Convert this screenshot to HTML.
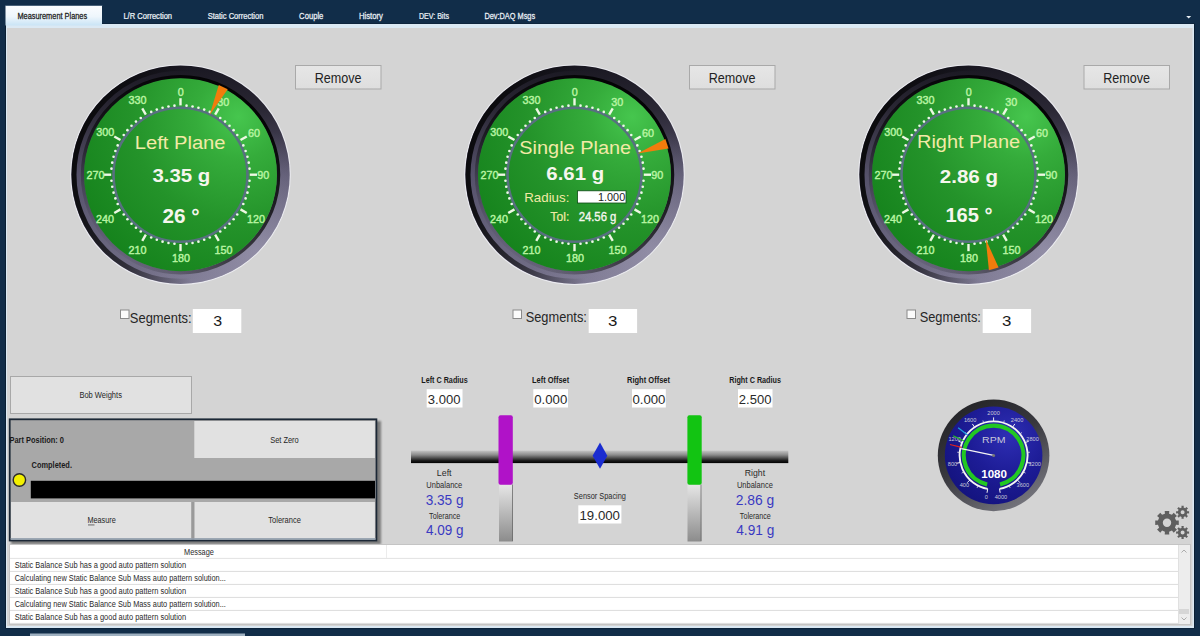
<!DOCTYPE html>
<html><head><meta charset="utf-8"><style>
html,body{margin:0;padding:0;width:1200px;height:636px;overflow:hidden;background:#112d49;}
svg{display:block;font-family:"Liberation Sans",sans-serif;}
</style></head><body>
<svg width="1200" height="636" viewBox="0 0 1200 636">
<defs><filter id="shd" x="-5%" y="-5%" width="110%" height="115%"><feGaussianBlur stdDeviation="1.0"/></filter><linearGradient id="tabg" x1="0" y1="0" x2="0" y2="1">
<stop offset="0" stop-color="#fbfdff"/><stop offset="0.55" stop-color="#eef6fc"/><stop offset="1" stop-color="#c9e4f6"/></linearGradient><linearGradient id="btng" x1="0" y1="0" x2="0" y2="1">
<stop offset="0" stop-color="#e6e6e6"/><stop offset="1" stop-color="#dedede"/></linearGradient><linearGradient id="bez1" x1="0.5" y1="0" x2="0.5" y2="1">
<stop offset="0" stop-color="#1a1822"/><stop offset="0.2" stop-color="#2a2734"/><stop offset="0.5" stop-color="#55516a"/><stop offset="1" stop-color="#747089"/></linearGradient><radialGradient id="bezhi" cx="0.85" cy="0.85" r="0.55">
<stop offset="0" stop-color="#b0acc4" stop-opacity="0.55"/><stop offset="1" stop-color="#b0acc4" stop-opacity="0"/></radialGradient><linearGradient id="bezedge" x1="0" y1="0" x2="1" y2="0">
<stop offset="0" stop-color="#000" stop-opacity="0.85"/><stop offset="0.25" stop-color="#000" stop-opacity="0.55"/><stop offset="0.55" stop-color="#000" stop-opacity="0"/></linearGradient><linearGradient id="bezin" x1="0.146" y1="0.854" x2="0.854" y2="0.146">
<stop offset="0" stop-color="#000" stop-opacity="0.05"/><stop offset="0.35" stop-color="#000" stop-opacity="0.55"/><stop offset="1" stop-color="#000" stop-opacity="0.9"/></linearGradient><radialGradient id="face" cx="0.8" cy="0.2" r="1.0" fx="0.8" fy="0.2">
<stop offset="0" stop-color="#46c64e"/><stop offset="0.22" stop-color="#35ac3b"/><stop offset="0.55" stop-color="#24932a"/><stop offset="1" stop-color="#13801a"/></radialGradient><linearGradient id="barg" x1="0" y1="0" x2="0" y2="1">
<stop offset="0" stop-color="#c4c4c4"/><stop offset="0.35" stop-color="#8a8a8a"/><stop offset="0.8" stop-color="#1a1a1a"/><stop offset="1" stop-color="#000"/></linearGradient><linearGradient id="stemg" x1="0" y1="0" x2="0" y2="1">
<stop offset="0" stop-color="#e6e6e6"/><stop offset="1" stop-color="#8c8c8c"/></linearGradient><radialGradient id="rpmface" cx="0.65" cy="0.3" r="0.8">
<stop offset="0" stop-color="#2e2eb4"/><stop offset="0.5" stop-color="#1d1c96"/><stop offset="1" stop-color="#13127c"/></radialGradient><linearGradient id="rpmbez" x1="0.2" y1="0" x2="0.8" y2="1">
<stop offset="0" stop-color="#232326"/><stop offset="0.45" stop-color="#38383e"/><stop offset="1" stop-color="#7c7c84"/></linearGradient></defs>
<rect x="0" y="0" width="1200" height="636" fill="#112d49"/>
<rect x="5" y="23.5" width="1190" height="605" fill="#0a1f33"/>
<rect x="6" y="24" width="1188" height="604" fill="#dbe9f4"/>
<rect x="7" y="28" width="1185.5" height="598" fill="#d4d4d4"/>
<rect x="5.5" y="5.5" width="96.5" height="20" fill="url(#tabg)"/>
<rect x="5" y="5" width="97.5" height="0.8" fill="#3a5570"/>
<text transform="translate(17.41,18.80) scale(0.8696,1)" font-size="8.5" font-weight="normal" fill="#222222" stroke="#222222" stroke-width="0.25">Measurement Planes</text>
<text transform="translate(123.40,18.80) scale(0.8889,1)" font-size="8.5" font-weight="normal" fill="#eaf0f6" stroke="#eaf0f6" stroke-width="0.25">L/R Correction</text>
<text transform="translate(207.66,18.80) scale(0.8888,1)" font-size="8.5" font-weight="normal" fill="#eaf0f6" stroke="#eaf0f6" stroke-width="0.25">Static Correction</text>
<text transform="translate(299.12,18.80) scale(0.8991,1)" font-size="8.5" font-weight="normal" fill="#eaf0f6" stroke="#eaf0f6" stroke-width="0.25">Couple</text>
<text transform="translate(358.88,18.80) scale(0.9124,1)" font-size="8.5" font-weight="normal" fill="#eaf0f6" stroke="#eaf0f6" stroke-width="0.25">History</text>
<text transform="translate(418.93,18.80) scale(0.8342,1)" font-size="8.5" font-weight="normal" fill="#eaf0f6" stroke="#eaf0f6" stroke-width="0.25">DEV: Bits</text>
<text transform="translate(484.41,18.80) scale(0.8682,1)" font-size="8.5" font-weight="normal" fill="#eaf0f6" stroke="#eaf0f6" stroke-width="0.25">Dev:DAQ Msgs</text>
<path d="M1186.2 16 L1191.2 16 L1188.7 18.6 Z" fill="#e8eef4"/>
<rect x="295.5" y="65.5" width="85.5" height="23.5" fill="url(#btng)" stroke="#a9a9a9" stroke-width="1"/>
<text transform="translate(314.79,82.60) scale(0.9118,1)" font-size="13.8" font-weight="normal" fill="#222" >Remove</text>
<rect x="689.5" y="65.5" width="85.5" height="23.5" fill="url(#btng)" stroke="#a9a9a9" stroke-width="1"/>
<text transform="translate(708.79,82.60) scale(0.9118,1)" font-size="13.8" font-weight="normal" fill="#222" >Remove</text>
<rect x="1084.0" y="65.5" width="85.5" height="23.5" fill="url(#btng)" stroke="#a9a9a9" stroke-width="1"/>
<text transform="translate(1103.29,82.60) scale(0.9118,1)" font-size="13.8" font-weight="normal" fill="#222" >Remove</text>
<circle cx="180.5" cy="174.7" r="110.3" fill="#f0f0f6" opacity="0.8"/>
<circle cx="180.5" cy="174.7" r="109.2" fill="url(#bez1)"/>
<circle cx="180.5" cy="174.7" r="109.2" fill="url(#bezhi)"/>
<circle cx="180.5" cy="174.7" r="106.5" fill="none" stroke="url(#bezedge)" stroke-width="5"/>
<circle cx="180.5" cy="174.7" r="98" fill="none" stroke="url(#bezin)" stroke-width="3.5"/>
<circle cx="180.5" cy="174.7" r="96.5" fill="url(#face)"/>
<circle cx="180.5" cy="174.7" r="67" fill="none" stroke="#587080" stroke-width="2.6"/>
<line x1="180.50" y1="105.40" x2="180.50" y2="98.20" stroke="#eef8e4" stroke-width="2.4"/>
<circle cx="186.54" cy="105.66" r="1.3" fill="#eef8ea"/>
<circle cx="192.53" cy="106.45" r="1.3" fill="#eef8ea"/>
<circle cx="198.44" cy="107.76" r="1.3" fill="#eef8ea"/>
<circle cx="204.20" cy="109.58" r="1.3" fill="#eef8ea"/>
<circle cx="209.79" cy="111.89" r="1.3" fill="#eef8ea"/>
<line x1="215.15" y1="114.68" x2="218.75" y2="108.45" stroke="#eef8e4" stroke-width="2.4"/>
<circle cx="220.25" cy="117.93" r="1.3" fill="#eef8ea"/>
<circle cx="225.05" cy="121.61" r="1.3" fill="#eef8ea"/>
<circle cx="229.50" cy="125.70" r="1.3" fill="#eef8ea"/>
<circle cx="233.59" cy="130.15" r="1.3" fill="#eef8ea"/>
<circle cx="237.27" cy="134.95" r="1.3" fill="#eef8ea"/>
<line x1="240.52" y1="140.05" x2="246.75" y2="136.45" stroke="#eef8e4" stroke-width="2.4"/>
<circle cx="243.31" cy="145.41" r="1.3" fill="#eef8ea"/>
<circle cx="245.62" cy="151.00" r="1.3" fill="#eef8ea"/>
<circle cx="247.44" cy="156.76" r="1.3" fill="#eef8ea"/>
<circle cx="248.75" cy="162.67" r="1.3" fill="#eef8ea"/>
<circle cx="249.54" cy="168.66" r="1.3" fill="#eef8ea"/>
<line x1="249.80" y1="174.70" x2="257.00" y2="174.70" stroke="#eef8e4" stroke-width="2.4"/>
<circle cx="249.54" cy="180.74" r="1.3" fill="#eef8ea"/>
<circle cx="248.75" cy="186.73" r="1.3" fill="#eef8ea"/>
<circle cx="247.44" cy="192.64" r="1.3" fill="#eef8ea"/>
<circle cx="245.62" cy="198.40" r="1.3" fill="#eef8ea"/>
<circle cx="243.31" cy="203.99" r="1.3" fill="#eef8ea"/>
<line x1="240.52" y1="209.35" x2="246.75" y2="212.95" stroke="#eef8e4" stroke-width="2.4"/>
<circle cx="237.27" cy="214.45" r="1.3" fill="#eef8ea"/>
<circle cx="233.59" cy="219.25" r="1.3" fill="#eef8ea"/>
<circle cx="229.50" cy="223.70" r="1.3" fill="#eef8ea"/>
<circle cx="225.05" cy="227.79" r="1.3" fill="#eef8ea"/>
<circle cx="220.25" cy="231.47" r="1.3" fill="#eef8ea"/>
<line x1="215.15" y1="234.72" x2="218.75" y2="240.95" stroke="#eef8e4" stroke-width="2.4"/>
<circle cx="209.79" cy="237.51" r="1.3" fill="#eef8ea"/>
<circle cx="204.20" cy="239.82" r="1.3" fill="#eef8ea"/>
<circle cx="198.44" cy="241.64" r="1.3" fill="#eef8ea"/>
<circle cx="192.53" cy="242.95" r="1.3" fill="#eef8ea"/>
<circle cx="186.54" cy="243.74" r="1.3" fill="#eef8ea"/>
<line x1="180.50" y1="244.00" x2="180.50" y2="251.20" stroke="#eef8e4" stroke-width="2.4"/>
<circle cx="174.46" cy="243.74" r="1.3" fill="#eef8ea"/>
<circle cx="168.47" cy="242.95" r="1.3" fill="#eef8ea"/>
<circle cx="162.56" cy="241.64" r="1.3" fill="#eef8ea"/>
<circle cx="156.80" cy="239.82" r="1.3" fill="#eef8ea"/>
<circle cx="151.21" cy="237.51" r="1.3" fill="#eef8ea"/>
<line x1="145.85" y1="234.72" x2="142.25" y2="240.95" stroke="#eef8e4" stroke-width="2.4"/>
<circle cx="140.75" cy="231.47" r="1.3" fill="#eef8ea"/>
<circle cx="135.95" cy="227.79" r="1.3" fill="#eef8ea"/>
<circle cx="131.50" cy="223.70" r="1.3" fill="#eef8ea"/>
<circle cx="127.41" cy="219.25" r="1.3" fill="#eef8ea"/>
<circle cx="123.73" cy="214.45" r="1.3" fill="#eef8ea"/>
<line x1="120.48" y1="209.35" x2="114.25" y2="212.95" stroke="#eef8e4" stroke-width="2.4"/>
<circle cx="117.69" cy="203.99" r="1.3" fill="#eef8ea"/>
<circle cx="115.38" cy="198.40" r="1.3" fill="#eef8ea"/>
<circle cx="113.56" cy="192.64" r="1.3" fill="#eef8ea"/>
<circle cx="112.25" cy="186.73" r="1.3" fill="#eef8ea"/>
<circle cx="111.46" cy="180.74" r="1.3" fill="#eef8ea"/>
<line x1="111.20" y1="174.70" x2="104.00" y2="174.70" stroke="#eef8e4" stroke-width="2.4"/>
<circle cx="111.46" cy="168.66" r="1.3" fill="#eef8ea"/>
<circle cx="112.25" cy="162.67" r="1.3" fill="#eef8ea"/>
<circle cx="113.56" cy="156.76" r="1.3" fill="#eef8ea"/>
<circle cx="115.38" cy="151.00" r="1.3" fill="#eef8ea"/>
<circle cx="117.69" cy="145.41" r="1.3" fill="#eef8ea"/>
<line x1="120.48" y1="140.05" x2="114.25" y2="136.45" stroke="#eef8e4" stroke-width="2.4"/>
<circle cx="123.73" cy="134.95" r="1.3" fill="#eef8ea"/>
<circle cx="127.41" cy="130.15" r="1.3" fill="#eef8ea"/>
<circle cx="131.50" cy="125.70" r="1.3" fill="#eef8ea"/>
<circle cx="135.95" cy="121.61" r="1.3" fill="#eef8ea"/>
<circle cx="140.75" cy="117.93" r="1.3" fill="#eef8ea"/>
<line x1="145.85" y1="114.68" x2="142.25" y2="108.45" stroke="#eef8e4" stroke-width="2.4"/>
<circle cx="151.21" cy="111.89" r="1.3" fill="#eef8ea"/>
<circle cx="156.80" cy="109.58" r="1.3" fill="#eef8ea"/>
<circle cx="162.56" cy="107.76" r="1.3" fill="#eef8ea"/>
<circle cx="168.47" cy="106.45" r="1.3" fill="#eef8ea"/>
<circle cx="174.46" cy="105.66" r="1.3" fill="#eef8ea"/>
<text transform="translate(177.73,96.20) scale(0.9300,1)" font-size="11.6" font-weight="normal" fill="#b8f4a2" stroke="#b8f4a2" stroke-width="0.45">0</text>
<text transform="translate(217.24,105.50) scale(0.9300,1)" font-size="11.6" font-weight="normal" fill="#b8f4a2" stroke="#b8f4a2" stroke-width="0.45">30</text>
<text transform="translate(248.03,136.70) scale(0.9300,1)" font-size="11.6" font-weight="normal" fill="#b8f4a2" stroke="#b8f4a2" stroke-width="0.45">60</text>
<text transform="translate(257.16,179.00) scale(0.9300,1)" font-size="11.6" font-weight="normal" fill="#b8f4a2" stroke="#b8f4a2" stroke-width="0.45">90</text>
<text transform="translate(247.00,223.00) scale(0.9300,1)" font-size="11.6" font-weight="normal" fill="#b8f4a2" stroke="#b8f4a2" stroke-width="0.45">120</text>
<text transform="translate(214.55,254.00) scale(0.9300,1)" font-size="11.6" font-weight="normal" fill="#b8f4a2" stroke="#b8f4a2" stroke-width="0.45">150</text>
<text transform="translate(171.90,262.40) scale(0.9300,1)" font-size="11.6" font-weight="normal" fill="#b8f4a2" stroke="#b8f4a2" stroke-width="0.45">180</text>
<text transform="translate(128.44,254.00) scale(0.9300,1)" font-size="11.6" font-weight="normal" fill="#b8f4a2" stroke="#b8f4a2" stroke-width="0.45">210</text>
<text transform="translate(96.04,223.10) scale(0.9300,1)" font-size="11.6" font-weight="normal" fill="#b8f4a2" stroke="#b8f4a2" stroke-width="0.45">240</text>
<text transform="translate(86.44,179.00) scale(0.9300,1)" font-size="11.6" font-weight="normal" fill="#b8f4a2" stroke="#b8f4a2" stroke-width="0.45">270</text>
<text transform="translate(96.19,135.70) scale(0.9300,1)" font-size="11.6" font-weight="normal" fill="#b8f4a2" stroke="#b8f4a2" stroke-width="0.45">300</text>
<text transform="translate(128.49,104.10) scale(0.9300,1)" font-size="11.6" font-weight="normal" fill="#b8f4a2" stroke="#b8f4a2" stroke-width="0.45">330</text>
<path d="M209.65 114.93 L227.74 89.26 L218.75 84.88 Z" fill="#f27c0c"/>
<circle cx="574.5" cy="174.7" r="110.3" fill="#f0f0f6" opacity="0.8"/>
<circle cx="574.5" cy="174.7" r="109.2" fill="url(#bez1)"/>
<circle cx="574.5" cy="174.7" r="109.2" fill="url(#bezhi)"/>
<circle cx="574.5" cy="174.7" r="106.5" fill="none" stroke="url(#bezedge)" stroke-width="5"/>
<circle cx="574.5" cy="174.7" r="98" fill="none" stroke="url(#bezin)" stroke-width="3.5"/>
<circle cx="574.5" cy="174.7" r="96.5" fill="url(#face)"/>
<circle cx="574.5" cy="174.7" r="67" fill="none" stroke="#587080" stroke-width="2.6"/>
<line x1="574.50" y1="105.40" x2="574.50" y2="98.20" stroke="#eef8e4" stroke-width="2.4"/>
<circle cx="580.54" cy="105.66" r="1.3" fill="#eef8ea"/>
<circle cx="586.53" cy="106.45" r="1.3" fill="#eef8ea"/>
<circle cx="592.44" cy="107.76" r="1.3" fill="#eef8ea"/>
<circle cx="598.20" cy="109.58" r="1.3" fill="#eef8ea"/>
<circle cx="603.79" cy="111.89" r="1.3" fill="#eef8ea"/>
<line x1="609.15" y1="114.68" x2="612.75" y2="108.45" stroke="#eef8e4" stroke-width="2.4"/>
<circle cx="614.25" cy="117.93" r="1.3" fill="#eef8ea"/>
<circle cx="619.05" cy="121.61" r="1.3" fill="#eef8ea"/>
<circle cx="623.50" cy="125.70" r="1.3" fill="#eef8ea"/>
<circle cx="627.59" cy="130.15" r="1.3" fill="#eef8ea"/>
<circle cx="631.27" cy="134.95" r="1.3" fill="#eef8ea"/>
<line x1="634.52" y1="140.05" x2="640.75" y2="136.45" stroke="#eef8e4" stroke-width="2.4"/>
<circle cx="637.31" cy="145.41" r="1.3" fill="#eef8ea"/>
<circle cx="639.62" cy="151.00" r="1.3" fill="#eef8ea"/>
<circle cx="641.44" cy="156.76" r="1.3" fill="#eef8ea"/>
<circle cx="642.75" cy="162.67" r="1.3" fill="#eef8ea"/>
<circle cx="643.54" cy="168.66" r="1.3" fill="#eef8ea"/>
<line x1="643.80" y1="174.70" x2="651.00" y2="174.70" stroke="#eef8e4" stroke-width="2.4"/>
<circle cx="643.54" cy="180.74" r="1.3" fill="#eef8ea"/>
<circle cx="642.75" cy="186.73" r="1.3" fill="#eef8ea"/>
<circle cx="641.44" cy="192.64" r="1.3" fill="#eef8ea"/>
<circle cx="639.62" cy="198.40" r="1.3" fill="#eef8ea"/>
<circle cx="637.31" cy="203.99" r="1.3" fill="#eef8ea"/>
<line x1="634.52" y1="209.35" x2="640.75" y2="212.95" stroke="#eef8e4" stroke-width="2.4"/>
<circle cx="631.27" cy="214.45" r="1.3" fill="#eef8ea"/>
<circle cx="627.59" cy="219.25" r="1.3" fill="#eef8ea"/>
<circle cx="623.50" cy="223.70" r="1.3" fill="#eef8ea"/>
<circle cx="619.05" cy="227.79" r="1.3" fill="#eef8ea"/>
<circle cx="614.25" cy="231.47" r="1.3" fill="#eef8ea"/>
<line x1="609.15" y1="234.72" x2="612.75" y2="240.95" stroke="#eef8e4" stroke-width="2.4"/>
<circle cx="603.79" cy="237.51" r="1.3" fill="#eef8ea"/>
<circle cx="598.20" cy="239.82" r="1.3" fill="#eef8ea"/>
<circle cx="592.44" cy="241.64" r="1.3" fill="#eef8ea"/>
<circle cx="586.53" cy="242.95" r="1.3" fill="#eef8ea"/>
<circle cx="580.54" cy="243.74" r="1.3" fill="#eef8ea"/>
<line x1="574.50" y1="244.00" x2="574.50" y2="251.20" stroke="#eef8e4" stroke-width="2.4"/>
<circle cx="568.46" cy="243.74" r="1.3" fill="#eef8ea"/>
<circle cx="562.47" cy="242.95" r="1.3" fill="#eef8ea"/>
<circle cx="556.56" cy="241.64" r="1.3" fill="#eef8ea"/>
<circle cx="550.80" cy="239.82" r="1.3" fill="#eef8ea"/>
<circle cx="545.21" cy="237.51" r="1.3" fill="#eef8ea"/>
<line x1="539.85" y1="234.72" x2="536.25" y2="240.95" stroke="#eef8e4" stroke-width="2.4"/>
<circle cx="534.75" cy="231.47" r="1.3" fill="#eef8ea"/>
<circle cx="529.95" cy="227.79" r="1.3" fill="#eef8ea"/>
<circle cx="525.50" cy="223.70" r="1.3" fill="#eef8ea"/>
<circle cx="521.41" cy="219.25" r="1.3" fill="#eef8ea"/>
<circle cx="517.73" cy="214.45" r="1.3" fill="#eef8ea"/>
<line x1="514.48" y1="209.35" x2="508.25" y2="212.95" stroke="#eef8e4" stroke-width="2.4"/>
<circle cx="511.69" cy="203.99" r="1.3" fill="#eef8ea"/>
<circle cx="509.38" cy="198.40" r="1.3" fill="#eef8ea"/>
<circle cx="507.56" cy="192.64" r="1.3" fill="#eef8ea"/>
<circle cx="506.25" cy="186.73" r="1.3" fill="#eef8ea"/>
<circle cx="505.46" cy="180.74" r="1.3" fill="#eef8ea"/>
<line x1="505.20" y1="174.70" x2="498.00" y2="174.70" stroke="#eef8e4" stroke-width="2.4"/>
<circle cx="505.46" cy="168.66" r="1.3" fill="#eef8ea"/>
<circle cx="506.25" cy="162.67" r="1.3" fill="#eef8ea"/>
<circle cx="507.56" cy="156.76" r="1.3" fill="#eef8ea"/>
<circle cx="509.38" cy="151.00" r="1.3" fill="#eef8ea"/>
<circle cx="511.69" cy="145.41" r="1.3" fill="#eef8ea"/>
<line x1="514.48" y1="140.05" x2="508.25" y2="136.45" stroke="#eef8e4" stroke-width="2.4"/>
<circle cx="517.73" cy="134.95" r="1.3" fill="#eef8ea"/>
<circle cx="521.41" cy="130.15" r="1.3" fill="#eef8ea"/>
<circle cx="525.50" cy="125.70" r="1.3" fill="#eef8ea"/>
<circle cx="529.95" cy="121.61" r="1.3" fill="#eef8ea"/>
<circle cx="534.75" cy="117.93" r="1.3" fill="#eef8ea"/>
<line x1="539.85" y1="114.68" x2="536.25" y2="108.45" stroke="#eef8e4" stroke-width="2.4"/>
<circle cx="545.21" cy="111.89" r="1.3" fill="#eef8ea"/>
<circle cx="550.80" cy="109.58" r="1.3" fill="#eef8ea"/>
<circle cx="556.56" cy="107.76" r="1.3" fill="#eef8ea"/>
<circle cx="562.47" cy="106.45" r="1.3" fill="#eef8ea"/>
<circle cx="568.46" cy="105.66" r="1.3" fill="#eef8ea"/>
<text transform="translate(571.73,96.20) scale(0.9300,1)" font-size="11.6" font-weight="normal" fill="#b8f4a2" stroke="#b8f4a2" stroke-width="0.45">0</text>
<text transform="translate(611.24,105.50) scale(0.9300,1)" font-size="11.6" font-weight="normal" fill="#b8f4a2" stroke="#b8f4a2" stroke-width="0.45">30</text>
<text transform="translate(642.03,136.70) scale(0.9300,1)" font-size="11.6" font-weight="normal" fill="#b8f4a2" stroke="#b8f4a2" stroke-width="0.45">60</text>
<text transform="translate(651.16,179.00) scale(0.9300,1)" font-size="11.6" font-weight="normal" fill="#b8f4a2" stroke="#b8f4a2" stroke-width="0.45">90</text>
<text transform="translate(641.00,223.00) scale(0.9300,1)" font-size="11.6" font-weight="normal" fill="#b8f4a2" stroke="#b8f4a2" stroke-width="0.45">120</text>
<text transform="translate(608.55,254.00) scale(0.9300,1)" font-size="11.6" font-weight="normal" fill="#b8f4a2" stroke="#b8f4a2" stroke-width="0.45">150</text>
<text transform="translate(565.90,262.40) scale(0.9300,1)" font-size="11.6" font-weight="normal" fill="#b8f4a2" stroke="#b8f4a2" stroke-width="0.45">180</text>
<text transform="translate(522.44,254.00) scale(0.9300,1)" font-size="11.6" font-weight="normal" fill="#b8f4a2" stroke="#b8f4a2" stroke-width="0.45">210</text>
<text transform="translate(490.04,223.10) scale(0.9300,1)" font-size="11.6" font-weight="normal" fill="#b8f4a2" stroke="#b8f4a2" stroke-width="0.45">240</text>
<text transform="translate(480.44,179.00) scale(0.9300,1)" font-size="11.6" font-weight="normal" fill="#b8f4a2" stroke="#b8f4a2" stroke-width="0.45">270</text>
<text transform="translate(490.19,135.70) scale(0.9300,1)" font-size="11.6" font-weight="normal" fill="#b8f4a2" stroke="#b8f4a2" stroke-width="0.45">300</text>
<text transform="translate(522.49,104.10) scale(0.9300,1)" font-size="11.6" font-weight="normal" fill="#b8f4a2" stroke="#b8f4a2" stroke-width="0.45">330</text>
<path d="M637.56 153.60 L668.55 148.50 L665.38 139.02 Z" fill="#f27c0c"/>
<circle cx="968.5" cy="174.7" r="110.3" fill="#f0f0f6" opacity="0.8"/>
<circle cx="968.5" cy="174.7" r="109.2" fill="url(#bez1)"/>
<circle cx="968.5" cy="174.7" r="109.2" fill="url(#bezhi)"/>
<circle cx="968.5" cy="174.7" r="106.5" fill="none" stroke="url(#bezedge)" stroke-width="5"/>
<circle cx="968.5" cy="174.7" r="98" fill="none" stroke="url(#bezin)" stroke-width="3.5"/>
<circle cx="968.5" cy="174.7" r="96.5" fill="url(#face)"/>
<circle cx="968.5" cy="174.7" r="67" fill="none" stroke="#587080" stroke-width="2.6"/>
<line x1="968.50" y1="105.40" x2="968.50" y2="98.20" stroke="#eef8e4" stroke-width="2.4"/>
<circle cx="974.54" cy="105.66" r="1.3" fill="#eef8ea"/>
<circle cx="980.53" cy="106.45" r="1.3" fill="#eef8ea"/>
<circle cx="986.44" cy="107.76" r="1.3" fill="#eef8ea"/>
<circle cx="992.20" cy="109.58" r="1.3" fill="#eef8ea"/>
<circle cx="997.79" cy="111.89" r="1.3" fill="#eef8ea"/>
<line x1="1003.15" y1="114.68" x2="1006.75" y2="108.45" stroke="#eef8e4" stroke-width="2.4"/>
<circle cx="1008.25" cy="117.93" r="1.3" fill="#eef8ea"/>
<circle cx="1013.05" cy="121.61" r="1.3" fill="#eef8ea"/>
<circle cx="1017.50" cy="125.70" r="1.3" fill="#eef8ea"/>
<circle cx="1021.59" cy="130.15" r="1.3" fill="#eef8ea"/>
<circle cx="1025.27" cy="134.95" r="1.3" fill="#eef8ea"/>
<line x1="1028.52" y1="140.05" x2="1034.75" y2="136.45" stroke="#eef8e4" stroke-width="2.4"/>
<circle cx="1031.31" cy="145.41" r="1.3" fill="#eef8ea"/>
<circle cx="1033.62" cy="151.00" r="1.3" fill="#eef8ea"/>
<circle cx="1035.44" cy="156.76" r="1.3" fill="#eef8ea"/>
<circle cx="1036.75" cy="162.67" r="1.3" fill="#eef8ea"/>
<circle cx="1037.54" cy="168.66" r="1.3" fill="#eef8ea"/>
<line x1="1037.80" y1="174.70" x2="1045.00" y2="174.70" stroke="#eef8e4" stroke-width="2.4"/>
<circle cx="1037.54" cy="180.74" r="1.3" fill="#eef8ea"/>
<circle cx="1036.75" cy="186.73" r="1.3" fill="#eef8ea"/>
<circle cx="1035.44" cy="192.64" r="1.3" fill="#eef8ea"/>
<circle cx="1033.62" cy="198.40" r="1.3" fill="#eef8ea"/>
<circle cx="1031.31" cy="203.99" r="1.3" fill="#eef8ea"/>
<line x1="1028.52" y1="209.35" x2="1034.75" y2="212.95" stroke="#eef8e4" stroke-width="2.4"/>
<circle cx="1025.27" cy="214.45" r="1.3" fill="#eef8ea"/>
<circle cx="1021.59" cy="219.25" r="1.3" fill="#eef8ea"/>
<circle cx="1017.50" cy="223.70" r="1.3" fill="#eef8ea"/>
<circle cx="1013.05" cy="227.79" r="1.3" fill="#eef8ea"/>
<circle cx="1008.25" cy="231.47" r="1.3" fill="#eef8ea"/>
<line x1="1003.15" y1="234.72" x2="1006.75" y2="240.95" stroke="#eef8e4" stroke-width="2.4"/>
<circle cx="997.79" cy="237.51" r="1.3" fill="#eef8ea"/>
<circle cx="992.20" cy="239.82" r="1.3" fill="#eef8ea"/>
<circle cx="986.44" cy="241.64" r="1.3" fill="#eef8ea"/>
<circle cx="980.53" cy="242.95" r="1.3" fill="#eef8ea"/>
<circle cx="974.54" cy="243.74" r="1.3" fill="#eef8ea"/>
<line x1="968.50" y1="244.00" x2="968.50" y2="251.20" stroke="#eef8e4" stroke-width="2.4"/>
<circle cx="962.46" cy="243.74" r="1.3" fill="#eef8ea"/>
<circle cx="956.47" cy="242.95" r="1.3" fill="#eef8ea"/>
<circle cx="950.56" cy="241.64" r="1.3" fill="#eef8ea"/>
<circle cx="944.80" cy="239.82" r="1.3" fill="#eef8ea"/>
<circle cx="939.21" cy="237.51" r="1.3" fill="#eef8ea"/>
<line x1="933.85" y1="234.72" x2="930.25" y2="240.95" stroke="#eef8e4" stroke-width="2.4"/>
<circle cx="928.75" cy="231.47" r="1.3" fill="#eef8ea"/>
<circle cx="923.95" cy="227.79" r="1.3" fill="#eef8ea"/>
<circle cx="919.50" cy="223.70" r="1.3" fill="#eef8ea"/>
<circle cx="915.41" cy="219.25" r="1.3" fill="#eef8ea"/>
<circle cx="911.73" cy="214.45" r="1.3" fill="#eef8ea"/>
<line x1="908.48" y1="209.35" x2="902.25" y2="212.95" stroke="#eef8e4" stroke-width="2.4"/>
<circle cx="905.69" cy="203.99" r="1.3" fill="#eef8ea"/>
<circle cx="903.38" cy="198.40" r="1.3" fill="#eef8ea"/>
<circle cx="901.56" cy="192.64" r="1.3" fill="#eef8ea"/>
<circle cx="900.25" cy="186.73" r="1.3" fill="#eef8ea"/>
<circle cx="899.46" cy="180.74" r="1.3" fill="#eef8ea"/>
<line x1="899.20" y1="174.70" x2="892.00" y2="174.70" stroke="#eef8e4" stroke-width="2.4"/>
<circle cx="899.46" cy="168.66" r="1.3" fill="#eef8ea"/>
<circle cx="900.25" cy="162.67" r="1.3" fill="#eef8ea"/>
<circle cx="901.56" cy="156.76" r="1.3" fill="#eef8ea"/>
<circle cx="903.38" cy="151.00" r="1.3" fill="#eef8ea"/>
<circle cx="905.69" cy="145.41" r="1.3" fill="#eef8ea"/>
<line x1="908.48" y1="140.05" x2="902.25" y2="136.45" stroke="#eef8e4" stroke-width="2.4"/>
<circle cx="911.73" cy="134.95" r="1.3" fill="#eef8ea"/>
<circle cx="915.41" cy="130.15" r="1.3" fill="#eef8ea"/>
<circle cx="919.50" cy="125.70" r="1.3" fill="#eef8ea"/>
<circle cx="923.95" cy="121.61" r="1.3" fill="#eef8ea"/>
<circle cx="928.75" cy="117.93" r="1.3" fill="#eef8ea"/>
<line x1="933.85" y1="114.68" x2="930.25" y2="108.45" stroke="#eef8e4" stroke-width="2.4"/>
<circle cx="939.21" cy="111.89" r="1.3" fill="#eef8ea"/>
<circle cx="944.80" cy="109.58" r="1.3" fill="#eef8ea"/>
<circle cx="950.56" cy="107.76" r="1.3" fill="#eef8ea"/>
<circle cx="956.47" cy="106.45" r="1.3" fill="#eef8ea"/>
<circle cx="962.46" cy="105.66" r="1.3" fill="#eef8ea"/>
<text transform="translate(965.73,96.20) scale(0.9300,1)" font-size="11.6" font-weight="normal" fill="#b8f4a2" stroke="#b8f4a2" stroke-width="0.45">0</text>
<text transform="translate(1005.24,105.50) scale(0.9300,1)" font-size="11.6" font-weight="normal" fill="#b8f4a2" stroke="#b8f4a2" stroke-width="0.45">30</text>
<text transform="translate(1036.03,136.70) scale(0.9300,1)" font-size="11.6" font-weight="normal" fill="#b8f4a2" stroke="#b8f4a2" stroke-width="0.45">60</text>
<text transform="translate(1045.16,179.00) scale(0.9300,1)" font-size="11.6" font-weight="normal" fill="#b8f4a2" stroke="#b8f4a2" stroke-width="0.45">90</text>
<text transform="translate(1035.00,223.00) scale(0.9300,1)" font-size="11.6" font-weight="normal" fill="#b8f4a2" stroke="#b8f4a2" stroke-width="0.45">120</text>
<text transform="translate(1002.55,254.00) scale(0.9300,1)" font-size="11.6" font-weight="normal" fill="#b8f4a2" stroke="#b8f4a2" stroke-width="0.45">150</text>
<text transform="translate(959.90,262.40) scale(0.9300,1)" font-size="11.6" font-weight="normal" fill="#b8f4a2" stroke="#b8f4a2" stroke-width="0.45">180</text>
<text transform="translate(916.44,254.00) scale(0.9300,1)" font-size="11.6" font-weight="normal" fill="#b8f4a2" stroke="#b8f4a2" stroke-width="0.45">210</text>
<text transform="translate(884.04,223.10) scale(0.9300,1)" font-size="11.6" font-weight="normal" fill="#b8f4a2" stroke="#b8f4a2" stroke-width="0.45">240</text>
<text transform="translate(874.44,179.00) scale(0.9300,1)" font-size="11.6" font-weight="normal" fill="#b8f4a2" stroke="#b8f4a2" stroke-width="0.45">270</text>
<text transform="translate(884.19,135.70) scale(0.9300,1)" font-size="11.6" font-weight="normal" fill="#b8f4a2" stroke="#b8f4a2" stroke-width="0.45">300</text>
<text transform="translate(916.49,104.10) scale(0.9300,1)" font-size="11.6" font-weight="normal" fill="#b8f4a2" stroke="#b8f4a2" stroke-width="0.45">330</text>
<path d="M985.71 238.93 L988.91 270.17 L998.56 267.58 Z" fill="#f27c0c"/>
<text transform="translate(134.79,148.50) scale(1.0611,1)" font-size="19" font-weight="normal" fill="#f2eaa6" >Left Plane</text>
<text transform="translate(152.39,182.30) scale(1.1047,1)" font-size="18.5" font-weight="bold" fill="#f6f6ee" >3.35 g</text>
<text transform="translate(162.47,222.90) scale(1.0646,1)" font-size="19.5" font-weight="bold" fill="#f6f6ee" >26 °</text>
<text transform="translate(519.30,154.40) scale(1.0949,1)" font-size="18.2" font-weight="normal" fill="#f2eaa6" >Single Plane</text>
<text transform="translate(546.29,180.30) scale(1.0738,1)" font-size="19" font-weight="bold" fill="#f6f6ee" >6.61 g</text>
<text transform="translate(524.23,202.30) scale(0.9869,1)" font-size="13.5" font-weight="normal" fill="#f2eaa6" >Radius:</text>
<rect x="577.5" y="190.8" width="48.5" height="12.2" fill="#ffffff" stroke="#0d4a14" stroke-width="0.8"/>
<text transform="translate(597.98,200.80) scale(0.9460,1)" font-size="11.5" font-weight="normal" fill="#222" >1.000</text>
<text transform="translate(550.36,221.20) scale(0.9022,1)" font-size="13.5" font-weight="normal" fill="#f2eaa6" stroke="#f2eaa6" stroke-width="0.2">Tol:</text>
<text transform="translate(578.63,220.90) scale(0.9446,1)" font-size="12" font-weight="normal" fill="#f6f6ee" stroke="#f6f6ee" stroke-width="0.35">24.56 g</text>
<text transform="translate(917.00,148.10) scale(1.0505,1)" font-size="19" font-weight="normal" fill="#f2eaa6" >Right Plane</text>
<text transform="translate(939.78,182.80) scale(1.1107,1)" font-size="18.5" font-weight="bold" fill="#f6f6ee" >2.86 g</text>
<text transform="translate(945.39,222.40) scale(1.0325,1)" font-size="19.5" font-weight="bold" fill="#f6f6ee" >165 °</text>
<rect x="120.5" y="310.0" width="8.5" height="8.5" fill="#fbfbfb" stroke="#8a8a8a" stroke-width="1"/>
<text transform="translate(129.82,323.00) scale(0.9376,1)" font-size="13.8" font-weight="normal" fill="#262626" >Segments:</text>
<rect x="192.8" y="309" width="48.5" height="24" fill="#ffffff"/>
<text transform="translate(213.16,325.90) scale(1.0667,1)" font-size="15" font-weight="normal" fill="#1a1a1a" >3</text>
<rect x="513.0" y="310.0" width="8.5" height="8.5" fill="#fbfbfb" stroke="#8a8a8a" stroke-width="1"/>
<text transform="translate(525.72,321.60) scale(0.9282,1)" font-size="13.8" font-weight="normal" fill="#262626" >Segments:</text>
<rect x="588.7" y="309" width="48.4" height="24" fill="#ffffff"/>
<text transform="translate(607.93,326.00) scale(1.1228,1)" font-size="15" font-weight="normal" fill="#1a1a1a" >3</text>
<rect x="907.0" y="310.0" width="8.5" height="8.5" fill="#fbfbfb" stroke="#8a8a8a" stroke-width="1"/>
<text transform="translate(919.72,321.60) scale(0.9282,1)" font-size="13.8" font-weight="normal" fill="#262626" >Segments:</text>
<rect x="982.7" y="309" width="48.4" height="24" fill="#ffffff"/>
<text transform="translate(1001.93,326.00) scale(1.1228,1)" font-size="15" font-weight="normal" fill="#1a1a1a" >3</text>
<rect x="10.5" y="376.5" width="181" height="37" fill="#e1e1e1" stroke="#a8a8a8" stroke-width="1"/>
<text transform="translate(79.40,398.30) scale(0.8863,1)" font-size="8.5" font-weight="normal" fill="#262626" >Bob Weights</text>
<rect x="11" y="421" width="370" height="123.3" fill="#000" opacity="0.42" filter="url(#shd)"/>
<rect x="8.8" y="418.4" width="368.5" height="123" fill="#1c2836"/>
<rect x="10.6" y="420.2" width="365" height="119.4" fill="#a8a8a8"/>
<rect x="194.3" y="421" width="180.6" height="37" fill="#e1e1e1"/>
<text transform="translate(270.16,443.30) scale(0.8784,1)" font-size="8.5" font-weight="normal" fill="#262626" >Set Zero</text>
<text transform="translate(9.52,443.20) scale(0.8754,1)" font-size="8.5" font-weight="bold" fill="#1a1a1a" >Part Position: 0</text>
<text transform="translate(31.60,468.30) scale(0.8733,1)" font-size="8.5" font-weight="bold" fill="#1a1a1a" >Completed.</text>
<circle cx="19.4" cy="480" r="6.2" fill="#f3f000" stroke="#2b2b2b" stroke-width="1.4"/>
<rect x="30.8" y="480.8" width="344.2" height="17.6" fill="#000"/>
<rect x="11" y="502" width="180.4" height="37.6" fill="#e1e1e1"/>
<rect x="194.3" y="502" width="180.6" height="37.6" fill="#e1e1e1"/>
<rect x="10.6" y="538.2" width="365" height="1.6" fill="#8c9aa8"/>
<rect x="191.4" y="502" width="2.9" height="36.2" fill="#9a9a9a"/>
<text transform="translate(87.42,523.30) scale(0.8593,1)" font-size="8.5" font-weight="normal" fill="#262626" >Measure</text>
<rect x="88" y="524.6" width="6.5" height="0.7" fill="#333"/>
<text transform="translate(268.35,523.30) scale(0.8817,1)" font-size="8.5" font-weight="normal" fill="#262626" >Tolerance</text>
<text transform="translate(421.23,383.00) scale(0.8704,1)" font-size="8.3" font-weight="bold" fill="#1a1a1a" >Left C Radius</text>
<text transform="translate(532.02,383.00) scale(0.8987,1)" font-size="8.3" font-weight="bold" fill="#1a1a1a" >Left Offset</text>
<text transform="translate(627.01,383.00) scale(0.9071,1)" font-size="8.3" font-weight="bold" fill="#1a1a1a" >Right Offset</text>
<text transform="translate(729.23,383.00) scale(0.8720,1)" font-size="8.3" font-weight="bold" fill="#1a1a1a" >Right C Radius</text>
<rect x="426.7" y="389.2" width="35.8" height="18.3" fill="#ffffff"/>
<text transform="translate(427.78,403.70) scale(0.9683,1)" font-size="13.5" font-weight="normal" fill="#2a2a2a" >3.000</text>
<rect x="533.3" y="389.2" width="34.7" height="18.3" fill="#ffffff"/>
<text transform="translate(534.27,403.70) scale(0.9775,1)" font-size="13.5" font-weight="normal" fill="#2a2a2a" >0.000</text>
<rect x="632" y="389.2" width="33.8" height="18.3" fill="#ffffff"/>
<text transform="translate(632.47,403.70) scale(0.9775,1)" font-size="13.5" font-weight="normal" fill="#2a2a2a" >0.000</text>
<rect x="738" y="389.2" width="34.5" height="18.3" fill="#ffffff"/>
<text transform="translate(738.85,403.70) scale(0.9662,1)" font-size="13.5" font-weight="normal" fill="#2a2a2a" >2.500</text>
<rect x="411" y="450.6" width="377.3" height="12.5" fill="url(#barg)"/>
<rect x="499" y="484.5" width="14" height="57" fill="url(#stemg)"/>
<path d="M512.5 484.5 L512.5 541" stroke="#6a6a6a" stroke-width="0.8"/>
<rect x="687.5" y="484.5" width="14" height="57" fill="url(#stemg)"/>
<path d="M701.0 484.5 L701.0 541" stroke="#6a6a6a" stroke-width="0.8"/>
<rect x="498.5" y="415.3" width="14.3" height="69.5" rx="2" fill="#b012c8"/>
<rect x="687.4" y="415.3" width="14.3" height="69.5" rx="2" fill="#12c412"/>
<path d="M600 442.6 L607.3 455.7 L600 468.8 L592.6 455.7 Z" fill="#1a2cd0"/>
<text transform="translate(436.79,476.10) scale(1.0676,1)" font-size="8.3" font-weight="normal" fill="#2a2a2a" >Left</text>
<text transform="translate(426.34,488.20) scale(0.9075,1)" font-size="8.3" font-weight="normal" fill="#2a2a2a" >Unbalance</text>
<text transform="translate(425.65,504.60) scale(0.9746,1)" font-size="14" font-weight="normal" fill="#3a3ac2" >3.35 g</text>
<text transform="translate(429.06,519.00) scale(0.8690,1)" font-size="8.3" font-weight="normal" fill="#2a2a2a" >Tolerance</text>
<text transform="translate(425.93,535.40) scale(0.9674,1)" font-size="14" font-weight="normal" fill="#3a3ac2" >4.09 g</text>
<text transform="translate(744.81,476.10) scale(1.0465,1)" font-size="8.3" font-weight="normal" fill="#2a2a2a" >Right</text>
<text transform="translate(736.94,488.20) scale(0.9049,1)" font-size="8.3" font-weight="normal" fill="#2a2a2a" >Unbalance</text>
<text transform="translate(735.81,504.60) scale(0.9890,1)" font-size="14" font-weight="normal" fill="#3a3ac2" >2.86 g</text>
<text transform="translate(739.86,519.00) scale(0.8606,1)" font-size="8.3" font-weight="normal" fill="#2a2a2a" >Tolerance</text>
<text transform="translate(736.23,535.40) scale(0.9780,1)" font-size="14" font-weight="normal" fill="#3a3ac2" >4.91 g</text>
<text transform="translate(573.87,499.00) scale(0.8893,1)" font-size="8.3" font-weight="normal" fill="#2a2a2a" >Sensor Spacing</text>
<rect x="578.3" y="505.3" width="43.1" height="18.2" fill="#ffffff"/>
<text transform="translate(579.51,520.00) scale(0.9793,1)" font-size="13.5" font-weight="normal" fill="#2a2a2a" >19.000</text>
<circle cx="993.6" cy="455.4" r="55.8" fill="url(#rpmbez)"/>
<circle cx="993.6" cy="455.4" r="48.8" fill="url(#rpmface)"/>
<path d="M987.70 488.88 A34.0 34.0 0 1 1 999.50 488.88" fill="none" stroke="#f4f4f4" stroke-width="1.9"/>
<path d="M987.15 484.49 A29.8 29.8 0 1 1 1000.05 484.49" fill="none" stroke="#22c822" stroke-width="4.2"/>
<line x1="987.70" y1="488.88" x2="987.00" y2="492.82" stroke="#f0f0f0" stroke-width="1"/>
<line x1="978.16" y1="485.69" x2="977.03" y2="487.92" stroke="#e0e0e0" stroke-width="0.8"/>
<line x1="969.98" y1="479.86" x2="967.20" y2="482.73" stroke="#f0f0f0" stroke-width="1"/>
<line x1="963.86" y1="471.88" x2="961.68" y2="473.10" stroke="#e0e0e0" stroke-width="0.8"/>
<line x1="960.34" y1="462.47" x2="956.43" y2="463.30" stroke="#f0f0f0" stroke-width="1"/>
<line x1="959.73" y1="452.44" x2="957.24" y2="452.22" stroke="#e0e0e0" stroke-width="0.8"/>
<line x1="962.08" y1="442.66" x2="958.37" y2="441.16" stroke="#f0f0f0" stroke-width="1"/>
<line x1="967.18" y1="434.00" x2="965.23" y2="432.43" stroke="#e0e0e0" stroke-width="0.8"/>
<line x1="974.59" y1="427.21" x2="972.35" y2="423.90" stroke="#f0f0f0" stroke-width="1"/>
<line x1="983.66" y1="422.89" x2="982.93" y2="420.49" stroke="#e0e0e0" stroke-width="0.8"/>
<line x1="993.60" y1="421.40" x2="993.60" y2="417.40" stroke="#f0f0f0" stroke-width="1"/>
<line x1="1003.54" y1="422.89" x2="1004.27" y2="420.49" stroke="#e0e0e0" stroke-width="0.8"/>
<line x1="1012.61" y1="427.21" x2="1014.85" y2="423.90" stroke="#f0f0f0" stroke-width="1"/>
<line x1="1020.02" y1="434.00" x2="1021.97" y2="432.43" stroke="#e0e0e0" stroke-width="0.8"/>
<line x1="1025.12" y1="442.66" x2="1028.83" y2="441.16" stroke="#f0f0f0" stroke-width="1"/>
<line x1="1027.47" y1="452.44" x2="1029.96" y2="452.22" stroke="#e0e0e0" stroke-width="0.8"/>
<line x1="1026.86" y1="462.47" x2="1030.77" y2="463.30" stroke="#f0f0f0" stroke-width="1"/>
<line x1="1023.34" y1="471.88" x2="1025.52" y2="473.10" stroke="#e0e0e0" stroke-width="0.8"/>
<line x1="1017.22" y1="479.86" x2="1020.00" y2="482.73" stroke="#f0f0f0" stroke-width="1"/>
<line x1="1009.04" y1="485.69" x2="1010.17" y2="487.92" stroke="#e0e0e0" stroke-width="0.8"/>
<line x1="999.50" y1="488.88" x2="1000.20" y2="492.82" stroke="#f0f0f0" stroke-width="1"/>
<text x="986.31" y="498.56" font-size="5.6" fill="#c8c8d8" text-anchor="middle">0</text>
<text x="964.42" y="487.41" font-size="5.6" fill="#c8c8d8" text-anchor="middle">400</text>
<text x="952.52" y="465.93" font-size="5.6" fill="#c8c8d8" text-anchor="middle">800</text>
<text x="954.66" y="441.47" font-size="5.6" fill="#c8c8d8" text-anchor="middle">1200</text>
<text x="970.11" y="422.38" font-size="5.6" fill="#c8c8d8" text-anchor="middle">1600</text>
<text x="993.60" y="415.20" font-size="5.6" fill="#c8c8d8" text-anchor="middle">2000</text>
<text x="1017.09" y="422.38" font-size="5.6" fill="#c8c8d8" text-anchor="middle">2400</text>
<text x="1032.54" y="441.47" font-size="5.6" fill="#c8c8d8" text-anchor="middle">2800</text>
<text x="1034.68" y="465.93" font-size="5.6" fill="#c8c8d8" text-anchor="middle">3200</text>
<text x="1022.78" y="487.41" font-size="5.6" fill="#c8c8d8" text-anchor="middle">3600</text>
<text x="1000.89" y="498.56" font-size="5.6" fill="#c8c8d8" text-anchor="middle">4000</text>
<line x1="961.58" y1="447.42" x2="949.94" y2="444.51" stroke="#e02020" stroke-width="1.2"/>
<line x1="963.94" y1="440.93" x2="953.15" y2="435.67" stroke="#20c020" stroke-width="1.2"/>
<line x1="967.60" y1="435.08" x2="958.14" y2="427.70" stroke="#20a0e0" stroke-width="1.2"/>
<line x1="993.6" y1="455.4" x2="961.30" y2="448.65" stroke="#f4f4f4" stroke-width="1.3"/>
<circle cx="993.6" cy="455.4" r="1.5" fill="#777"/>
<text transform="translate(982.06,443.10) scale(1.1088,1)" font-size="9.5" font-weight="normal" fill="#c8c8d8" >RPM</text>
<text transform="translate(981.21,478.10) scale(1.0066,1)" font-size="11.5" font-weight="bold" fill="#ffffff" >1080</text>
<path d="M1164.91 513.64 L1164.71 510.92 L1169.29 510.92 L1169.09 513.64 L1171.93 514.81 L1173.71 512.75 L1176.95 515.99 L1174.89 517.77 L1176.06 520.61 L1178.78 520.41 L1178.78 524.99 L1176.06 524.79 L1174.89 527.63 L1176.95 529.41 L1173.71 532.65 L1171.93 530.59 L1169.09 531.76 L1169.29 534.48 L1164.71 534.48 L1164.91 531.76 L1162.07 530.59 L1160.29 532.65 L1157.05 529.41 L1159.11 527.63 L1157.94 524.79 L1155.22 524.99 L1155.22 520.41 L1157.94 520.61 L1159.11 517.77 L1157.05 515.99 L1160.29 512.75 L1162.07 514.81 Z M1171.2 522.7 A4.2 4.2 0 1 0 1162.8 522.7 A4.2 4.2 0 1 0 1171.2 522.7 Z" fill="#5f5f5f" fill-rule="evenodd"/>
<path d="M1181.60 507.60 L1181.45 505.80 L1183.75 505.80 L1183.60 507.60 L1185.21 508.27 L1186.39 506.89 L1188.01 508.51 L1186.63 509.69 L1187.30 511.30 L1189.10 511.15 L1189.10 513.45 L1187.30 513.30 L1186.63 514.91 L1188.01 516.09 L1186.39 517.71 L1185.21 516.33 L1183.60 517.00 L1183.75 518.80 L1181.45 518.80 L1181.60 517.00 L1179.99 516.33 L1178.81 517.71 L1177.19 516.09 L1178.57 514.91 L1177.90 513.30 L1176.10 513.45 L1176.10 511.15 L1177.90 511.30 L1178.57 509.69 L1177.19 508.51 L1178.81 506.89 L1179.99 508.27 Z M1184.6 512.3 A2.0 2.0 0 1 0 1180.6 512.3 A2.0 2.0 0 1 0 1184.6 512.3 Z" fill="#5f5f5f" fill-rule="evenodd"/>
<path d="M1181.60 527.90 L1181.45 526.10 L1183.75 526.10 L1183.60 527.90 L1185.21 528.57 L1186.39 527.19 L1188.01 528.81 L1186.63 529.99 L1187.30 531.60 L1189.10 531.45 L1189.10 533.75 L1187.30 533.60 L1186.63 535.21 L1188.01 536.39 L1186.39 538.01 L1185.21 536.63 L1183.60 537.30 L1183.75 539.10 L1181.45 539.10 L1181.60 537.30 L1179.99 536.63 L1178.81 538.01 L1177.19 536.39 L1178.57 535.21 L1177.90 533.60 L1176.10 533.75 L1176.10 531.45 L1177.90 531.60 L1178.57 529.99 L1177.19 528.81 L1178.81 527.19 L1179.99 528.57 Z M1184.6 532.6 A2.0 2.0 0 1 0 1180.6 532.6 A2.0 2.0 0 1 0 1184.6 532.6 Z" fill="#5f5f5f" fill-rule="evenodd"/>
<rect x="9.5" y="544.5" width="1181" height="80" fill="#ffffff" stroke="#c4c4c4" stroke-width="1"/>
<rect x="10" y="545" width="1168" height="13.4" fill="#ffffff"/>
<line x1="10" y1="558.4" x2="1178" y2="558.4" stroke="#e2e2e2" stroke-width="1"/>
<line x1="386.5" y1="545" x2="386.5" y2="558" stroke="#ececec" stroke-width="1"/>
<text transform="translate(184.01,555.00) scale(0.8891,1)" font-size="8.3" font-weight="normal" fill="#2a2a2a" >Message</text>
<line x1="10" y1="571.40" x2="1178" y2="571.40" stroke="#dcdcdc" stroke-width="1"/>
<text transform="translate(14.66,567.70) scale(0.8995,1)" font-size="8.3" font-weight="normal" fill="#2a2a2a" >Static Balance Sub has a good auto pattern solution</text>
<line x1="10" y1="584.40" x2="1178" y2="584.40" stroke="#dcdcdc" stroke-width="1"/>
<text transform="translate(14.63,580.70) scale(0.8903,1)" font-size="8.3" font-weight="normal" fill="#2a2a2a" >Calculating new Static Balance Sub Mass auto pattern solution...</text>
<line x1="10" y1="597.40" x2="1178" y2="597.40" stroke="#dcdcdc" stroke-width="1"/>
<text transform="translate(14.66,593.70) scale(0.8995,1)" font-size="8.3" font-weight="normal" fill="#2a2a2a" >Static Balance Sub has a good auto pattern solution</text>
<line x1="10" y1="610.40" x2="1178" y2="610.40" stroke="#dcdcdc" stroke-width="1"/>
<text transform="translate(14.63,606.70) scale(0.8903,1)" font-size="8.3" font-weight="normal" fill="#2a2a2a" >Calculating new Static Balance Sub Mass auto pattern solution...</text>
<line x1="10" y1="623.40" x2="1178" y2="623.40" stroke="#dcdcdc" stroke-width="1"/>
<text transform="translate(14.66,619.70) scale(0.8995,1)" font-size="8.3" font-weight="normal" fill="#2a2a2a" >Static Balance Sub has a good auto pattern solution</text>
<rect x="1178" y="545" width="12" height="79" fill="#ededed"/>
<line x1="1178.5" y1="545" x2="1178.5" y2="624" stroke="#e0e0e0" stroke-width="1"/>
<rect x="1179" y="609" width="10" height="5" fill="#d6d6d6"/>
<path d="M1181.5 552.5 L1184 550 L1186.5 552.5" fill="none" stroke="#9a9a9a" stroke-width="0.8"/>
<path d="M1181.5 617.5 L1184 620 L1186.5 617.5" fill="none" stroke="#9a9a9a" stroke-width="0.8"/>
<rect x="30" y="633.5" width="215" height="2.5" fill="#9eb0c0"/>
</svg></body></html>
